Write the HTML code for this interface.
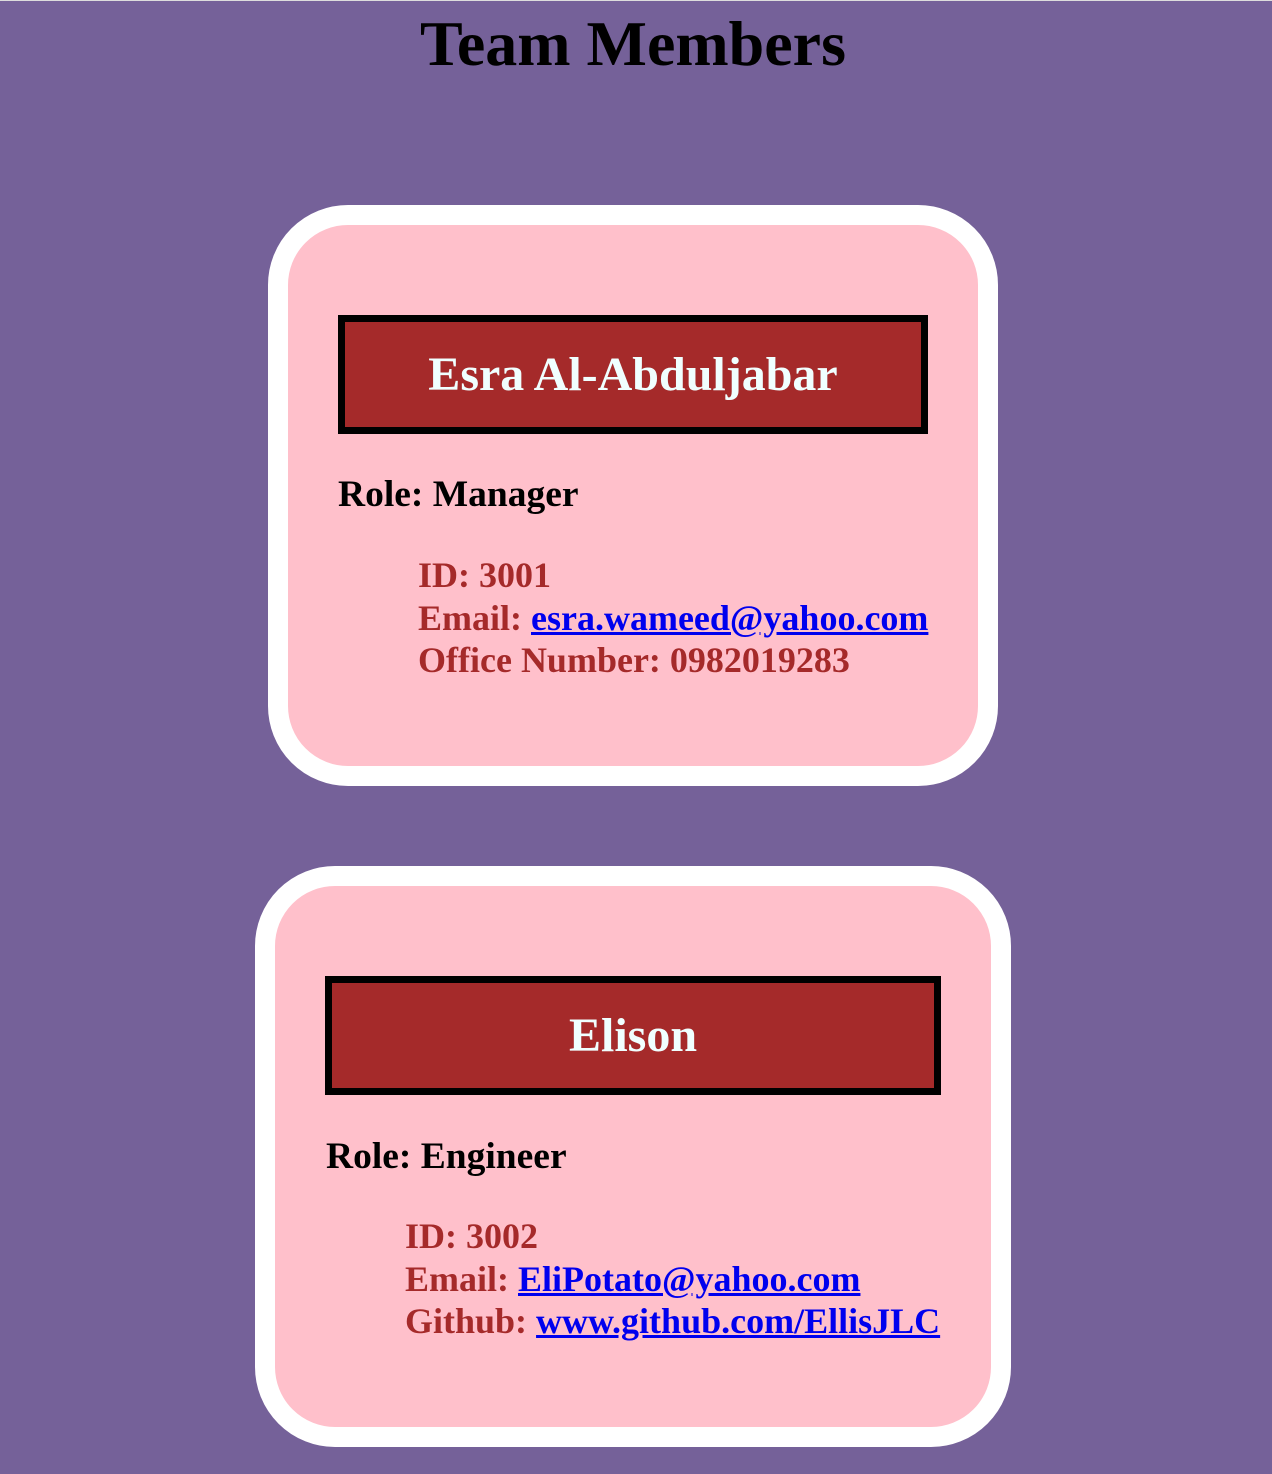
<!DOCTYPE html>
<html><head><meta charset="utf-8"><style>
html,body{margin:0;padding:0}
body{width:1272px;height:1474px;background:#756199;position:relative;overflow:hidden;font-family:"Liberation Serif",serif;font-weight:bold}
.topline{position:absolute;left:0;top:0;width:1272px;height:1px;background:#ddd}
.t{position:absolute;white-space:nowrap}
h1{position:absolute;top:-1px;left:-3px;width:1272px;text-align:center;margin:0;font-size:64px;line-height:90px;color:#000}
.card{position:absolute;background:#ffc0cb;border:20px solid #fff;border-radius:80px;box-sizing:border-box}
.name{position:absolute;background:#a52a2a;border:7px solid #000;box-sizing:border-box;color:#f0ffff;font-size:48px;display:flex;align-items:center;justify-content:center}
.role{font-size:37.5px;color:#000}
.li{font-size:36px;color:#a52a2a;line-height:42.5px}
a{color:#0000ee;text-decoration:underline}
</style></head><body>
<div class="topline"></div>
<h1>Team Members</h1>

<div class="card" style="left:268px;top:205px;width:730px;height:581px"></div>
<div class="name" style="left:338px;top:315px;width:590px;height:119px">Esra Al-Abduljabar</div>
<div class="t role" style="left:338px;top:473px">Role: Manager</div>
<div class="t li" style="left:418px;top:554px">ID: 3001<br>Email: <a>esra.wameed@yahoo.com</a><br>Office Number: 0982019283</div>

<div class="card" style="left:255px;top:866px;width:756px;height:581px"></div>
<div class="name" style="left:325px;top:976px;width:616px;height:119px">Elison</div>
<div class="t role" style="left:326px;top:1135px">Role: Engineer</div>
<div class="t li" style="left:405px;top:1215px">ID: 3002<br>Email: <a>EliPotato@yahoo.com</a><br>Github: <a>www.github.com/EllisJLC</a></div>
</body></html>
